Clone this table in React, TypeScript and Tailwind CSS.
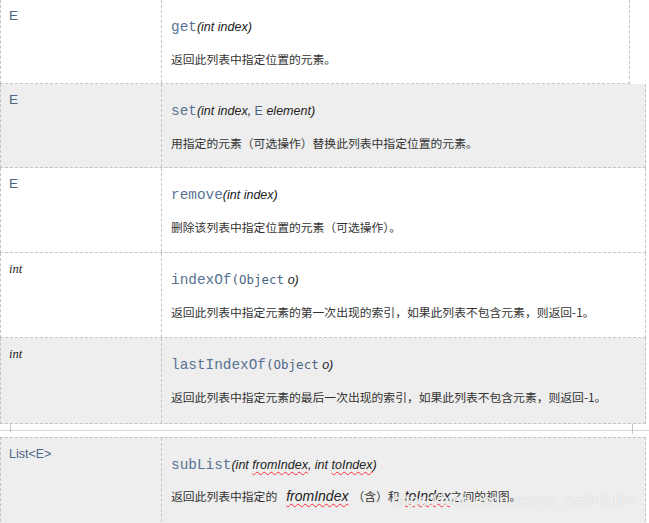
import React from "react";

const mono = { fontFamily: '"Liberation Mono", "DejaVu Sans Mono", monospace' };

function Row({ label, method, params, desc, gray, wide, h }) {
  return (
    <div
      className={`flex border-l border-b border-r border-dashed border-[#c4c4c4] ${gray ? "bg-[#eeeeee]" : "bg-white"} ${wide ? "w-[646px]" : "w-[630px]"}`}
      style={{ height: h }}
    >
      <div className="w-[161px] shrink-0 border-r border-dashed border-[#c4c4c4] pl-[8px] pt-[3px]">
        {label}
      </div>
      <div className="flex-1 pl-[9px]">
        <div className="mt-[12px] h-[22px] flex items-end text-[#587394]">
          <span className="text-[14.4px] leading-none" style={mono}>{method}</span>
          {params}
        </div>
        <div className="mt-[16px] text-[11.8px] text-[#333] font-['Noto_Sans_CJK_SC',sans-serif]">
          {desc}
        </div>
      </div>
    </div>
  );
}

const E = <span className="text-[13.5px] text-[#4b6685] font-['Liberation_Sans',sans-serif]">E</span>;
const Int = <span className="text-[12.5px] italic text-[#222] font-['Liberation_Serif',serif]">int</span>;

function P({ children }) {
  return (
    <span className="text-[12.5px] italic text-[#222] leading-none font-['Liberation_Sans',sans-serif] pb-[1px]">
      {children}
    </span>
  );
}

function Wavy({ children }) {
  return (
    <span className="underline decoration-wavy decoration-red-500 decoration-1 underline-offset-2 italic">
      {children}
    </span>
  );
}

const Obj = (
  <P>
    <span className="not-italic text-[#4b6685] text-[12.5px]" style={{ fontFamily: '"DejaVu Sans Mono", monospace' }}>
      (Object
    </span>{" "}
    o)
  </P>
);

export default function App() {
  return (
    <div className="relative w-[649px] h-[523px] overflow-hidden bg-white font-['Liberation_Sans',sans-serif]">
      <Row
        h={84}
        label={E}
        method="get"
        params={<P>(int index)</P>}
        desc="返回此列表中指定位置的元素。"
      />
      <Row
        h={84}
        gray
        wide
        label={E}
        method="set"
        params={
          <P>
            (int index, <span className="not-italic text-[#4b6685]">E</span> element)
          </P>
        }
        desc="用指定的元素（可选操作）替换此列表中指定位置的元素。"
      />
      <Row
        h={85}
        wide
        label={E}
        method="remove"
        params={<P>(int index)</P>}
        desc="删除该列表中指定位置的元素（可选操作）。"
      />
      <Row
        h={85}
        wide
        label={Int}
        method="indexOf"
        params={Obj}
        desc="返回此列表中指定元素的第一次出现的索引，如果此列表不包含元素，则返回-1。"
      />
      <Row
        h={86}
        gray
        wide
        label={Int}
        method="lastIndexOf"
        params={Obj}
        desc="返回此列表中指定元素的最后一次出现的索引，如果此列表不包含元素，则返回-1。"
      />

      <div className="relative h-[13px] w-full">
        <div className="absolute left-0 right-0 top-[6px] border-t border-[#d6d6d6]" />
        <div className="absolute left-[10px] top-0 h-[8px] border-l border-[#c4c4c4]" />
        <div className="absolute left-[632px] top-0 h-[10px] border-l border-[#c4c4c4]" />
      </div>

      <div className="flex w-[646px] h-[100px] border-l border-t border-r border-dashed border-[#c4c4c4] bg-[#eeeeee]">
        <div className="w-[161px] shrink-0 border-r border-dashed border-[#c4c4c4] pl-[8px] pt-[3px]">
          <span className="text-[12.5px] text-[#4b6685]">List&lt;E&gt;</span>
        </div>
        <div className="flex-1 pl-[9px]">
          <div className="mt-[12px] h-[22px] flex items-end text-[#587394]">
            <span className="text-[14.4px] leading-none" style={mono}>subList</span>
            <P>
              (int <Wavy>fromIndex</Wavy>, int <Wavy>toIndex</Wavy>)
            </P>
          </div>
          <div className="mt-[14px] text-[11.8px] text-[#333] font-['Noto_Sans_CJK_SC',sans-serif]">
            返回此列表中指定的
            <span className="ml-[9px] mr-[4px] text-[14px] text-[#222] font-['Liberation_Sans',sans-serif]">
              <Wavy>fromIndex</Wavy>
            </span>
            （含）和
            <span className="ml-[5px] text-[14px] text-[#222] font-['Liberation_Sans',sans-serif]">
              <Wavy>toIndex</Wavy>
            </span>
            之间的视图。
          </div>
        </div>
      </div>

      <div className="absolute left-[392px] top-[489px] text-[16px] text-white/80 [text-shadow:0_0_1px_#bdbdbd] font-['Liberation_Sans',sans-serif]">
        https://blog.csdn.net/qq_44045104
      </div>
    </div>
  );
}
